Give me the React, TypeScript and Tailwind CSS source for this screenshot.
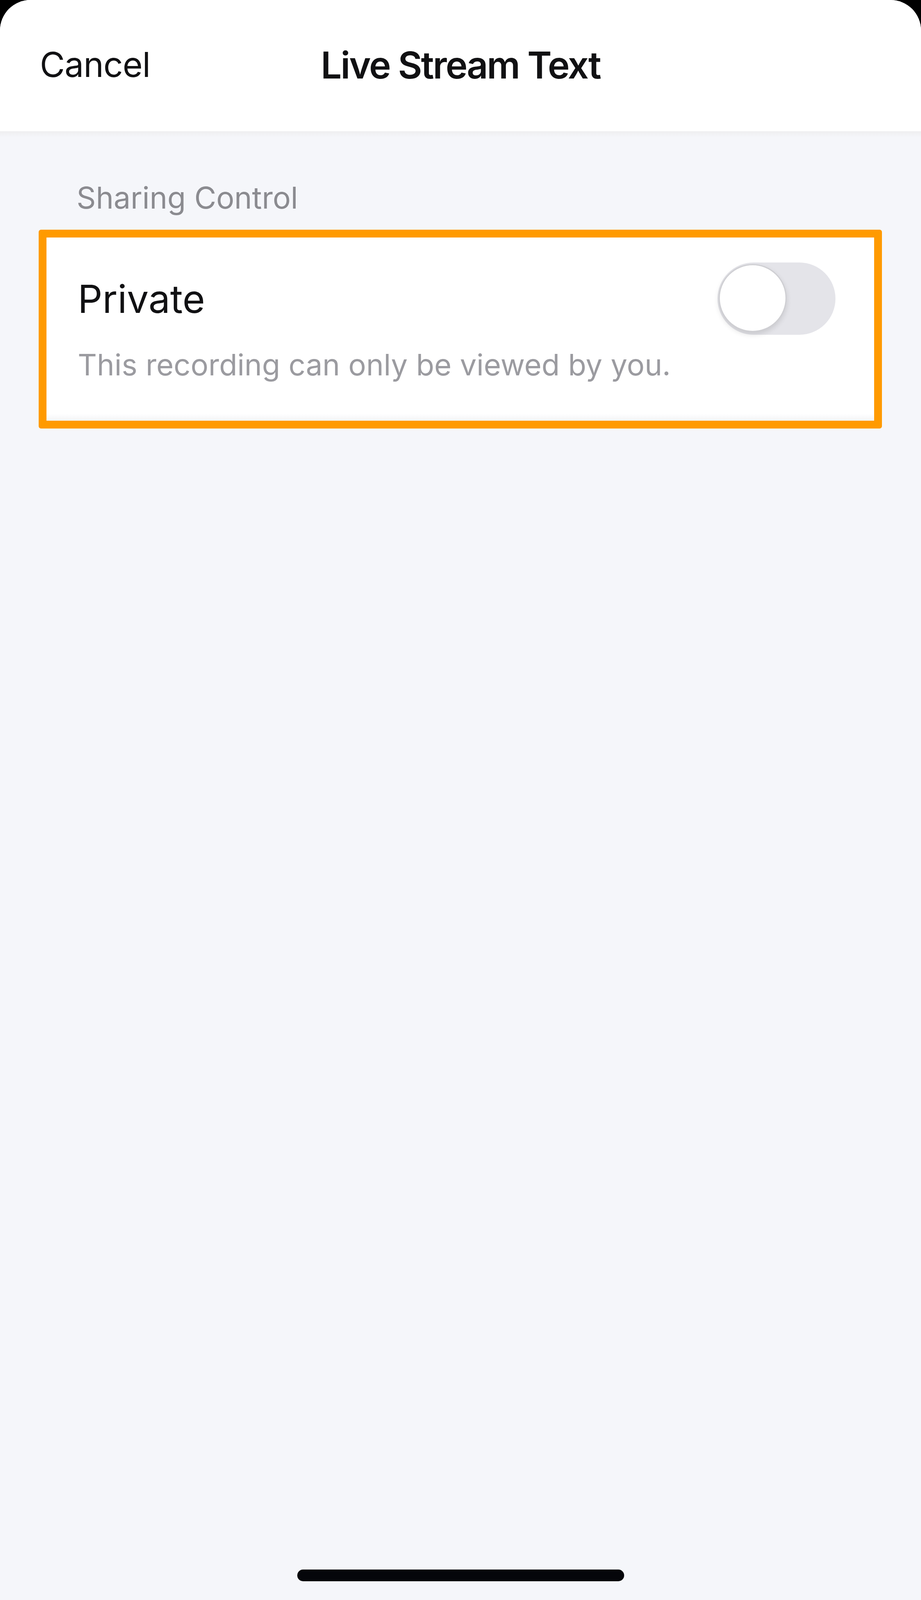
import React from "react";

export default function App() {
  const font = { fontFamily: "Inter, 'Noto Sans', sans-serif" };
  return (
    <div className="w-[2358px] h-screen bg-black overflow-hidden" style={font}>
      <div className="h-full w-full rounded-t-[78px] overflow-hidden bg-[#f5f6fa] flex flex-col">
        {/* Header */}
        <div className="h-[336px] bg-white grid grid-cols-[1fr_auto_1fr] items-start pt-[119px] shrink-0">
          <div className="pl-[102px] text-[88px] leading-none text-[#111113] mt-[2px] tracking-[-1px]">Cancel</div>
          <div className="text-[95px] leading-none font-semibold text-[#111113] tracking-[-3px]">Live Stream Text</div>
          <div />
        </div>
        <div className="h-[15px] bg-gradient-to-b from-[#eeeef0] to-[#f5f6fa] shrink-0" />

        {/* Content */}
        <div className="flex-1 min-h-0 flex flex-col">
          <div className="pl-[196px] pt-[117px] text-[77px] leading-none text-[#8b8b90]">Sharing Control</div>

          <div className="mt-[43px] ml-[99px] mr-[100px] border-[20px] border-[#ff9a00] rounded-[6px] bg-white flex flex-col">
            <div className="flex items-start justify-between pl-[80px] pr-[99px]">
              <div className="flex flex-col">
                <div className="pt-[108px] text-[99px] leading-none text-[#111113]">Private</div>
                <div className="mt-[80px] text-[76px] leading-none text-[#9b9ba0]">This recording can only be viewed by you.</div>
              </div>
              <div className="mt-[64px] w-[302px] h-[185px] rounded-full bg-[#e4e4e9] relative shrink-0">
                <div className="absolute left-[3px] top-[4px] w-[174px] h-[174px] rounded-full bg-white border-[3px] border-[#cfcfd3] shadow-[0_6px_14px_rgba(0,0,0,0.12)]" />
              </div>
            </div>
            <div className="h-[88px]" />
            <div className="h-[18px] bg-gradient-to-b from-white to-[#f3f4f7]" />
          </div>

          <div className="flex-1" />
          <div className="mx-auto mb-[48px] w-[837px] h-[30px] rounded-full bg-[#05060a] shrink-0" />
        </div>
      </div>
    </div>
  );
}
